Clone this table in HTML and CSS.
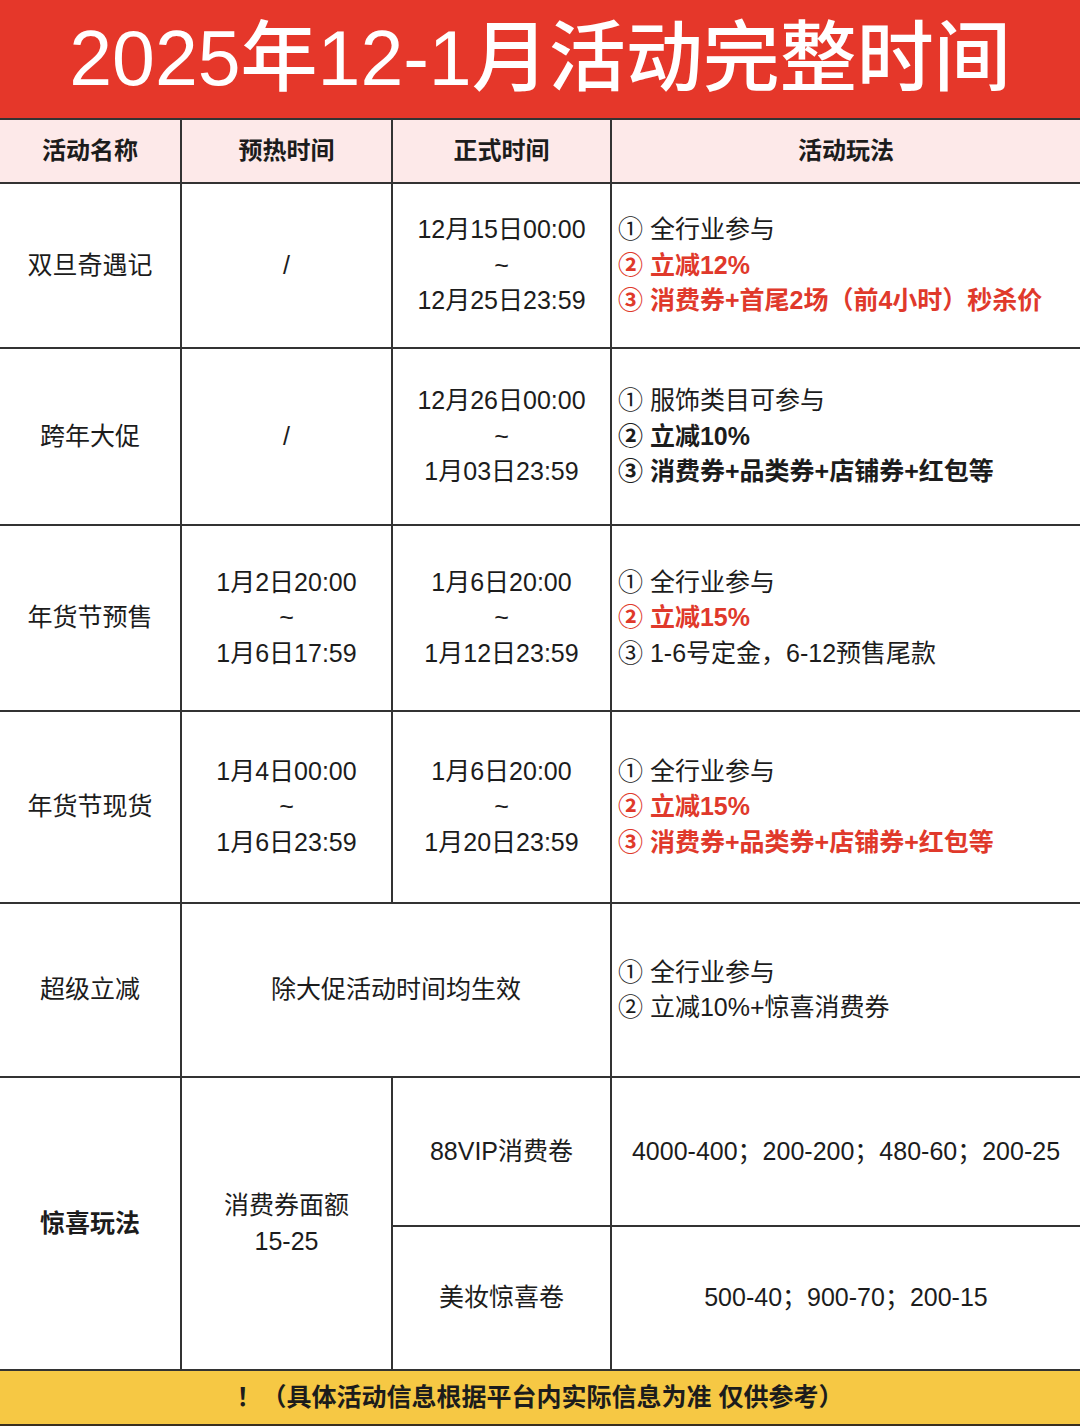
FILE: index.html
```html
<!DOCTYPE html>
<html lang="zh-CN">
<head>
<meta charset="utf-8">
<title>2025年12-1月活动完整时间</title>
<link rel="stylesheet" href="styles.css">
</head>
<body>
<div class="page">
  <header class="title">2025年12-1月活动完整时间</header>
  <div class="table">
    <div class="cell head">活动名称</div>
    <div class="cell head">预热时间</div>
    <div class="cell head">正式时间</div>
    <div class="cell head">活动玩法</div>

    <div class="cell r1">双旦奇遇记</div>
    <div class="cell r1">/</div>
    <div class="cell r1 times"><span>12月15日00:00</span><span>~</span><span>12月25日23:59</span></div>
    <div class="cell r1 play"><span>① 全行业参与</span><span class="red b">② 立减12%</span><span class="red b">③ 消费券+首尾2场（前4小时）秒杀价</span></div>

    <div class="cell r2">跨年大促</div>
    <div class="cell r2">/</div>
    <div class="cell r2 times"><span>12月26日00:00</span><span>~</span><span>1月03日23:59</span></div>
    <div class="cell r2 play"><span>① 服饰类目可参与</span><span class="b">② 立减10%</span><span class="b">③ 消费券+品类券+店铺券+红包等</span></div>

    <div class="cell r3">年货节预售</div>
    <div class="cell r3 times"><span>1月2日20:00</span><span>~</span><span>1月6日17:59</span></div>
    <div class="cell r3 times"><span>1月6日20:00</span><span>~</span><span>1月12日23:59</span></div>
    <div class="cell r3 play"><span>① 全行业参与</span><span class="red b">② 立减15%</span><span>③ 1-6号定金，6-12预售尾款</span></div>

    <div class="cell r4">年货节现货</div>
    <div class="cell r4 times"><span>1月4日00:00</span><span>~</span><span>1月6日23:59</span></div>
    <div class="cell r4 times"><span>1月6日20:00</span><span>~</span><span>1月20日23:59</span></div>
    <div class="cell r4 play"><span>① 全行业参与</span><span class="red b">② 立减15%</span><span class="red b">③ 消费券+品类券+店铺券+红包等</span></div>

    <div class="cell r5">超级立减</div>
    <div class="cell r5 span2">除大促活动时间均生效</div>
    <div class="cell r5 play"><span>① 全行业参与</span><span>② 立减10%+惊喜消费券</span></div>

    <div class="cell r6 b tall">惊喜玩法</div>
    <div class="cell r6 tall times"><span>消费券面额</span><span>15-25</span></div>
    <div class="cell r6a">88VIP消费卷</div>
    <div class="cell r6a">4000-400；200-200；480-60；200-25</div>
    <div class="cell r6b">美妆惊喜卷</div>
    <div class="cell r6b">500-40；900-70；200-15</div>
  </div>
  <footer class="note">！（具体活动信息根据平台内实际信息为准 仅供参考）</footer>
</div>
</body>
</html>
```

FILE: styles.css
```css
html, body {
  margin: 0;
  padding: 0;
  background: #ffffff;
}
.page {
  width: 1080px;
  height: 1427px;
  overflow: hidden;
  font-family: "Liberation Sans", "Noto Sans CJK SC", sans-serif;
  color: #1c1c1c;
}
.title {
  height: 118px;
  background: #e5372a;
  color: #ffffff;
  font-size: 77px;
  font-weight: 500;
  line-height: 116px;
  text-align: center;
  letter-spacing: 0;
}
.table {
  display: grid;
  grid-template-columns: 180px 209px 217px 468px;
  grid-template-rows: 62px 163px 175px 184px 190px 172px 147px 142px;
  gap: 2px;
  background: #333333;
  border-top: 2px solid #333333;
  border-bottom: 2px solid #333333;
  padding: 0 2px 0 0;
}
.cell {
  background: #ffffff;
  display: flex;
  flex-direction: column;
  align-items: center;
  justify-content: center;
  text-align: center;
  font-size: 25px;
  line-height: 35.5px;
}
.head {
  background: #fde9e9;
  font-weight: 700;
  font-size: 24px;
}
.play {
  align-items: flex-start;
  text-align: left;
  padding-left: 6px;
  font-size: 25px;
}
.times span, .play span {
  display: block;
  white-space: nowrap;
}
.red { color: #e0392b; }
.b { font-weight: 700; }
.span2 { grid-column: 2 / 4; }
.tall { grid-row: 7 / 9; }
.r6a { grid-row: 7; }
.r6b { grid-row: 8; }
.note {
  height: 53px;
  background: #f6c844;
  border-bottom: 2px solid #3a3020;
  font-size: 25px;
  font-weight: 700;
  line-height: 53px;
  text-align: center;
  color: #1c1c1c;
}
```
